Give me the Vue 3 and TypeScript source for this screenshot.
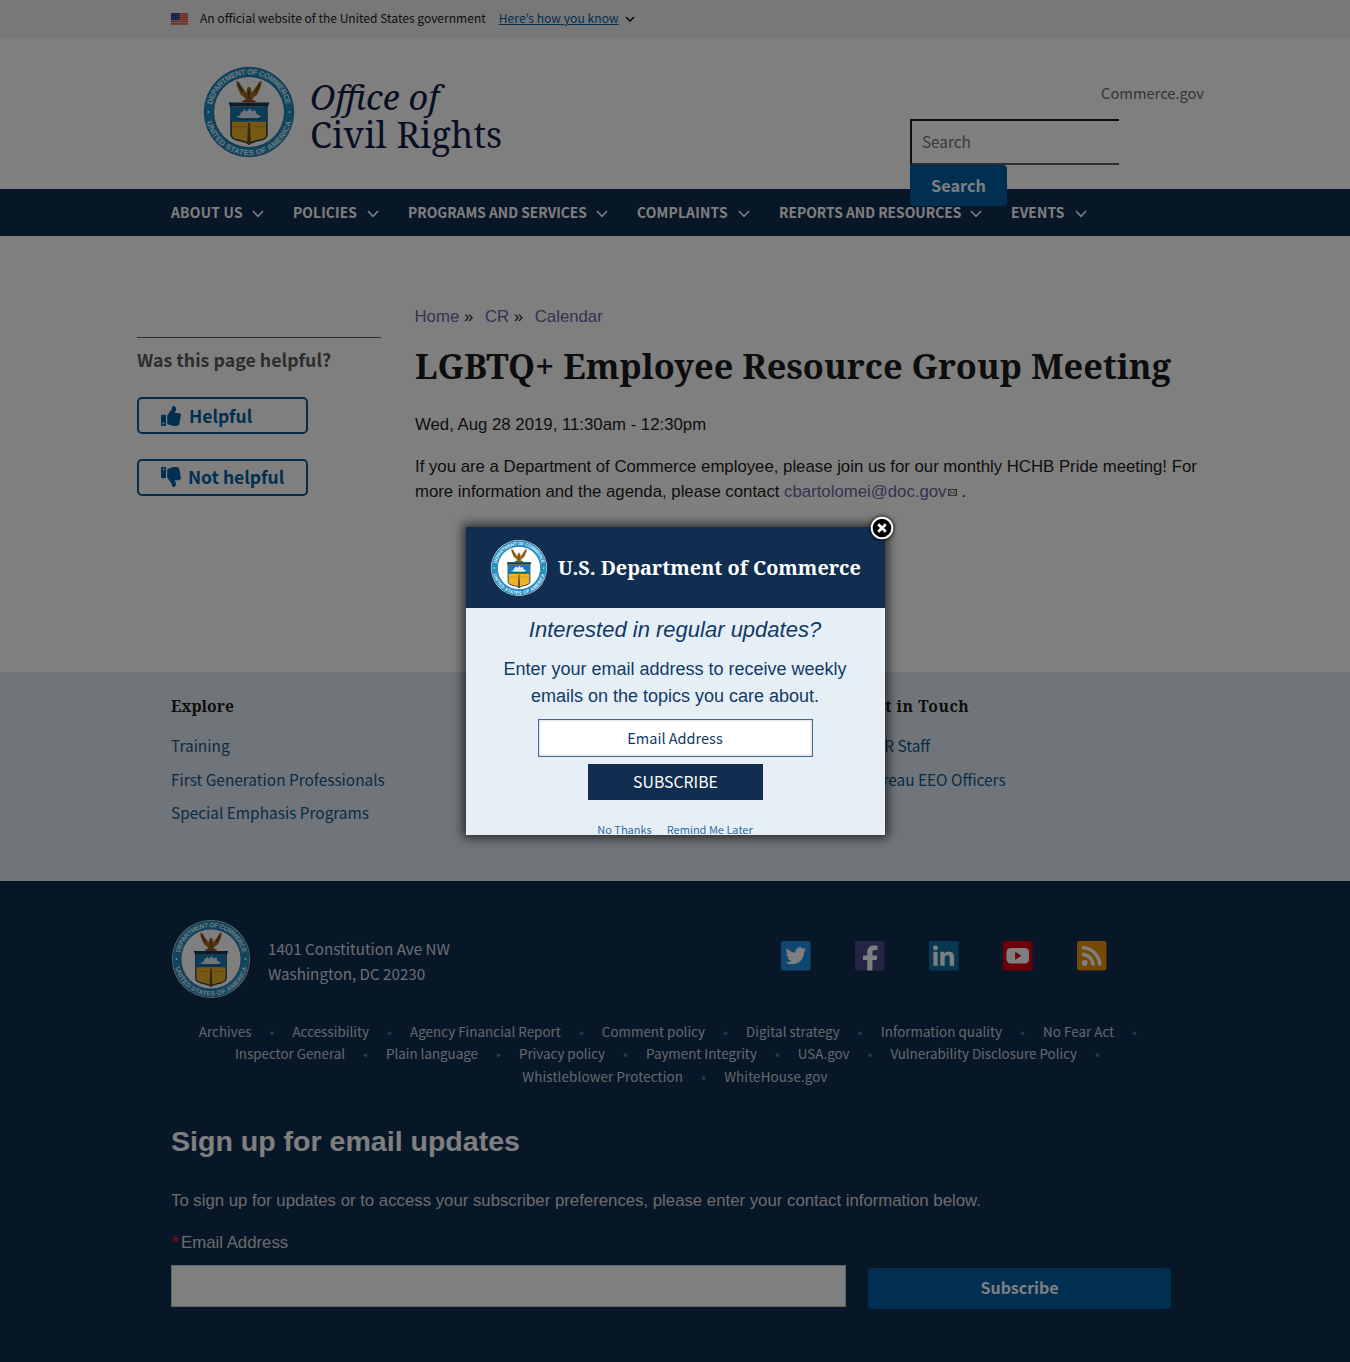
<script setup lang="ts">
interface MenuItem { label: string; spacing: string }

const menu: MenuItem[] = [
  { label: 'About Us', spacing: '0.25px' },
  { label: 'Policies', spacing: '0.1px' },
  { label: 'Programs and Services', spacing: '0' },
  { label: 'Complaints', spacing: '0.2px' },
  { label: 'Reports and Resources', spacing: '0' },
  { label: 'Events', spacing: '0.15px' },
]

const explore: string[] = ['Training', 'First Generation Professionals', 'Special Emphasis Programs']
const touch: string[] = ['OCR Staff', 'Bureau EEO Officers']

const footerRows: string[][] = [
  ['Archives', 'Accessibility', 'Agency Financial Report', 'Comment policy', 'Digital strategy', 'Information quality', 'No Fear Act'],
  ['Inspector General', 'Plain language', 'Privacy policy', 'Payment Integrity', 'USA.gov', 'Vulnerability Disclosure Policy'],
  ['Whistleblower Protection', 'WhiteHouse.gov'],
]

const thumb =
  'M104 224H24c-13.255 0-24 10.745-24 24v240c0 13.255 10.745 24 24 24h80c13.255 0 24-10.745 24-24V248c0-13.255-10.745-24-24-24zM64 472c-13.255 0-24-10.745-24-24s10.745-24 24-24 24 10.745 24 24-10.745 24-24 24zM384 81.452c0 42.416-25.97 66.208-33.277 94.548h101.723c33.397 0 59.397 27.746 59.553 58.098.084 17.938-7.546 37.249-19.439 49.197l-.11.11c9.836 23.337 8.237 56.037-9.308 79.469 8.681 25.895-.069 57.704-16.382 74.757 4.298 17.598 2.244 32.575-6.148 44.632C440.202 511.587 389.616 512 346.839 512l-2.845-.001c-48.287-.017-87.806-17.598-119.56-31.725-15.957-7.099-36.821-15.887-52.651-16.178-6.54-.12-11.783-5.457-11.783-11.998v-213.77c0-3.2 1.282-6.271 3.558-8.521 39.614-39.144 56.648-80.587 89.117-113.111 14.804-14.832 20.188-37.236 25.393-58.902C282.515 39.293 291.817 0 312 0c24 0 72 8 72 81.452z'
</script>

<template>
  <div class="page">
    <svg class="defs" width="0" height="0" aria-hidden="true">
      <defs>
        <path id="arc-top" d="M9.2 50 A40.8 40.8 0 0 1 90.8 50" />
        <path id="arc-bottom" d="M2.9 50 A47.1 47.1 0 0 0 97.1 50" />
        <symbol id="seal" viewBox="0 0 100 100">
          <circle cx="50" cy="50" r="48.6" fill="#1f8fc4" stroke="#1b6d9e" stroke-width="1" />
          <circle cx="50" cy="50" r="38.6" fill="#fff" stroke="#1b5f92" stroke-width="1" />
          <g font-family="Liberation Sans, Arial, sans-serif" font-weight="700" font-size="8.2" fill="#e3f3fa" text-anchor="middle">
            <text><textPath href="#arc-top" startOffset="50%" textLength="112">DEPARTMENT OF COMMERCE</textPath></text>
            <text><textPath href="#arc-bottom" startOffset="50%" textLength="126">UNITED STATES OF AMERICA</textPath></text>
          </g>
          <circle cx="5.8" cy="50" r="1.2" fill="#fff" />
          <circle cx="94.2" cy="50" r="1.2" fill="#fff" />
          <path d="M29 40.5h42l-1.5 4V75Q69 79 63 80.5Q54 82 50 85Q46 82 37 80.5Q31 79 30.5 75V44.5z" fill="#edb427" stroke="#173a55" stroke-width="1.6" />
          <path d="M30.5 44h39v16.5h-39z" fill="#1678b4" />
          <path d="M29 40.5h42l-1.4 3.3H30.4z" fill="#173a55" />
          <path d="M36 55l4-1 1-3 5-4 1 3 4-4 2 3 4-1 1 4 5 3-4 2H41z" fill="#dfe9f0" />
          <path d="M38 57.5h25" stroke="#12415f" stroke-width="1.2" />
          <path d="M49 62h2l1 22-2 1.5L48 84z" fill="#6b4a14" />
          <path d="M32 66h36" stroke="#c98f16" stroke-width="1" />
          <path d="M36 16l3 1 3 5 5 7 1-5 2-1.5 2 1.5 1 5 5-7 3-5 3-1-1 6-4 9-5 4v2l4 2H42l4-2v-2l-5-4-4-9z" fill="#a06c1c" />
          <path d="M38 19l5 9M62 19l-5 9M50 27v9" stroke="#56370c" stroke-width="1.4" fill="none" />
          <path d="M43 38.5h14" stroke="#9a3a22" stroke-width="1.8" />
        </symbol>
      </defs>
    </svg>

    <div class="banner">
      <svg class="flag" viewBox="0 0 17 12" width="17" height="12">
        <rect width="17" height="12" fill="#f0b8a8" />
        <path d="M0 .9h17M0 2.8h17M0 4.7h17M0 6.6h17M0 8.5h17M0 10.9h17" stroke="#dd4f3a" stroke-width="1.2" />
        <rect width="8.5" height="7" fill="#2a3f94" />
        <path d="M1 1.5h7M1 3.5h7M1 5.5h7" stroke="#7f8dc4" stroke-width=".6" stroke-dasharray="1 1" />
      </svg>
      <span class="official">An official website of the United States government</span>
      <a class="know">Here’s how you know</a>
      <svg class="tiny" width="10" height="7" viewBox="0 0 10 7"><path d="M1 1l4 4 4-4" /></svg>
    </div>

    <header class="header">
      <svg class="seal-lg"><use href="#seal" /></svg>
      <div class="brand">
        <div class="office">Office of</div>
        <div class="civil">Civil Rights</div>
      </div>
      <div class="tools">
        <a class="gov">Commerce.gov</a>
        <div class="field">Search</div>
        <div class="search-btn">Search</div>
      </div>
    </header>

    <nav class="nav">
      <div v-for="m in menu" :key="m.label" class="nav-item">
        <span :style="{ letterSpacing: m.spacing }">{{ m.label }}</span>
        <svg width="12" height="8" viewBox="0 0 12 8"><path d="M1 1l5 5.3L11 1" /></svg>
      </div>
    </nav>

    <main class="main">
      <aside class="aside">
        <div class="ask">Was this page helpful?</div>
        <div class="vote">
          <svg viewBox="0 0 512 512" width="20" height="20"><path :d="thumb" /></svg>Helpful
        </div>
        <div class="vote no">
          <svg class="down" viewBox="0 0 512 512" width="20" height="20"><path :d="thumb" /></svg>Not helpful
        </div>
      </aside>
      <article class="article">
        <div class="crumbs"><a>Home</a> » <a class="gap">CR</a> » <a class="gap">Calendar</a></div>
        <h1>LGBTQ+ Employee Resource Group Meeting</h1>
        <p class="date">Wed, Aug 28 2019, 11:30am - 12:30pm</p>
        <p class="body">
          If you are a Department of Commerce employee, please join us for our monthly HCHB Pride meeting! For<br />
          more information and the agenda, please contact <a>cbartolomei@doc.gov<svg class="mail" width="9" height="7" viewBox="0 0 9 7"><rect x=".5" y=".5" width="8" height="6" /><path d="M.5 1l4 3 4-3M1 6l2.5-2.5M8 6L5.5 3.5" /></svg></a> .
        </p>
      </article>
    </main>

    <section class="links">
      <div class="links-col">
        <h2>Explore</h2>
        <a v-for="l in explore" :key="l">{{ l }}</a>
      </div>
      <div class="links-col">
        <h2>Get in Touch</h2>
        <a v-for="l in touch" :key="l">{{ l }}</a>
      </div>
    </section>

    <footer class="footer">
      <div class="contact">
        <svg class="seal-md"><use href="#seal" /></svg>
        <address>1401 Constitution Ave NW<br />Washington, DC 20230</address>
        <div class="social">
          <svg viewBox="0 0 30 30"><rect width="30" height="30" rx="2" fill="#1d8fe0" /><path transform="translate(4.5 4.6) scale(.88)" fill="#fff" d="M23.953 4.57a10 10 0 01-2.825.775 4.958 4.958 0 002.163-2.723c-.951.555-2.005.959-3.127 1.184a4.92 4.92 0 00-8.384 4.482C7.69 8.095 4.067 6.13 1.64 3.162a4.822 4.822 0 00-.666 2.475c0 1.71.87 3.213 2.188 4.096a4.904 4.904 0 01-2.228-.616v.06a4.923 4.923 0 003.946 4.827 4.996 4.996 0 01-2.212.085 4.936 4.936 0 004.604 3.417 9.867 9.867 0 01-6.102 2.105c-.39 0-.779-.023-1.17-.067a13.995 13.995 0 007.557 2.209c9.053 0 13.998-7.496 13.998-13.985 0-.21 0-.42-.015-.63A9.935 9.935 0 0024 4.59z" /></svg>
          <svg viewBox="0 0 30 30"><rect width="30" height="30" rx="2" fill="#454a88" /><path fill="#fff" d="M12.5 30V19.3H8.2v-4.6h4.3v-3.2c0-4.5 2.6-6.9 6.6-6.9 1.9 0 3.3.1 3.8.2v4.4h-2.7c-2 0-2.5 1-2.5 2.5v3h5l-.7 4.6h-4.3V30z" /></svg>
          <svg viewBox="0 0 30 30"><rect width="30" height="30" rx="1" fill="#0a70a5" /><path fill="#fff" d="M4.5 11h4.3v14.2H4.5zM11.5 11h4.2v2c.7-1.3 2.2-2.4 4.4-2.4 4.5 0 5.4 2.9 5.4 6.8v7.8h-4.4v-7c0-1.7 0-3.7-2.3-3.7s-2.9 1.7-2.9 3.6v7.1h-4.4z" /><circle cx="6.6" cy="7" r="2.5" fill="#fff" /></svg>
          <svg viewBox="0 0 30 30"><rect width="30" height="30" rx="1" fill="#d80010" /><rect x="3.5" y="7" width="23" height="16" rx="4.5" fill="#fff" /><path fill="#d80010" d="M12.3 11v8l6.5-4z" /></svg>
          <svg viewBox="0 0 30 30"><rect width="30" height="30" rx="2.5" fill="#e8930c" /><circle cx="7.8" cy="22.3" r="2.9" fill="#fff" /><path d="M5 13.5c6.5 0 11.5 5 11.5 11.5M5 6.8c10 0 18.2 8.2 18.2 18.2" fill="none" stroke="#fff" stroke-width="3.4" /></svg>
        </div>
      </div>

      <div class="rows">
        <ul v-for="(row, i) in footerRows" :key="i" :class="'row-' + i">
          <li v-for="r in row" :key="r">{{ r }}</li>
        </ul>
      </div>

      <h2>Sign up for email updates</h2>
      <p class="intro">To sign up for updates or to access your subscriber preferences, please enter your contact information below.</p>
      <p class="label"><span>*</span>Email Address</p>
      <div class="form">
        <div class="email"></div>
        <div class="subscribe">Subscribe</div>
      </div>
    </footer>

    <div class="overlay"></div>

    <div class="modal">
      <div class="modal-head">
        <svg class="seal-sm"><use href="#seal" /></svg>
        <span>U.S. Department of Commerce</span>
      </div>
      <div class="modal-body">
        <div class="interest">Interested in regular updates?</div>
        <div class="enter">Enter your email address to receive weekly<br />emails on the topics you care about.</div>
        <div class="modal-input">Email Address</div>
        <div class="modal-btn">SUBSCRIBE</div>
        <div class="later"><a>No Thanks</a><a>Remind Me Later</a></div>
      </div>
    </div>
    <svg class="close" width="30" height="30" viewBox="0 0 30 30">
      <circle cx="15" cy="15" r="10.3" fill="#000" stroke="#fff" stroke-width="2" />
      <path d="M11.2 11.2l7.6 7.6M18.8 11.2l-7.6 7.6" stroke="#fff" stroke-width="2.8" />
    </svg>
  </div>
</template>

<style>
body {
  margin: 0;
}
</style>

<style scoped>
.page {
  --source: "Noto Sans CJK KR", "Noto Sans", sans-serif;
  --serif: "Noto Serif", "DejaVu Serif Condensed", serif;
  --sans: "Liberation Sans", Arial, sans-serif;
  position: relative;
  width: 1350px;
  height: 1362px;
  overflow: hidden;
  background: #fff;
  color: #1b1b1b;
  font-family: var(--source);
}
.defs { position: absolute; }
h1, h2, p, ul { margin: 0; padding: 0; }

.banner {
  box-sizing: border-box;
  height: 38px;
  padding-left: 171px;
  display: flex;
  align-items: center;
  background: #f0f0f0;
  font-size: 12.06px;
  line-height: 18px;
  white-space: nowrap;
}
.flag { margin-right: 12px; }
.official, .know { margin-top: -2px; }
.know { margin-left: 13px; margin-right: 6px; letter-spacing: .05px; color: #005ea2; text-decoration: underline; }
.tiny path { fill: none; stroke: #1b1b1b; stroke-width: 1.6; }

.header {
  position: relative;
  z-index: 2;
  height: 151px;
  display: flex;
  align-items: flex-start;
}
.seal-lg { width: 92px; height: 92px; margin: 28px 0 0 203px; }
.brand {
  width: 600px;
  margin: 40px 0 0 15px;
  font-family: var(--serif);
  color: #141d48;
}
.office { font-size: 34.3px; line-height: 38px; font-style: italic; }
.civil { font-size: 35.6px; line-height: 37px; letter-spacing: .15px; }
.tools { width: 295px; margin-top: 45px; }
.gov { display: block; font-size: 14.68px; line-height: 20px; text-align: right; padding-right: 1px; color: #666a70; }
.field {
  box-sizing: border-box;
  width: 209px;
  height: 46px;
  margin-top: 16px;
  padding-left: 10px;
  border: solid #1b1b1b;
  border-width: 2px 0 2px 2px;
  border-bottom-color: #565c65;
  font-size: 15.3px;
  line-height: 41px;
  color: #757575;
}
.search-btn {
  width: 97px;
  height: 41px;
  border-radius: 0 4px 4px 4px;
  background: #005ea2;
  color: #fff;
  font-size: 16.3px;
  font-weight: 700;
  line-height: 40px;
  text-align: center;
}

.nav {
  display: grid;
  grid-template-columns: 122px 115px 229px 142px 232px 105px;
  height: 47px;
  padding-left: 171px;
  background: #112e51;
  color: #fff;
}
.nav-item {
  display: flex;
  align-items: center;
  justify-content: space-between;
  padding-right: 29px;
  font-size: 13.83px;
  font-weight: 700;
  text-transform: uppercase;
  line-height: 24px;
  white-space: nowrap;
}
.nav-item span { margin-top: -1px; }
.nav-item svg { margin-top: 2px; }
.nav-item path { fill: none; stroke: #fff; stroke-width: 1.6; }

.main { height: 436px; display: flex; align-items: flex-start; }
.aside { width: 244px; margin: 101px 34px 0 137px; border-top: 1px solid #5b616b; }
.ask { margin: 7px 0 24px; font-size: 17.8px; font-weight: 700; line-height: 28px; color: #5b5b5b; }
.vote {
  box-sizing: border-box;
  display: flex;
  align-items: center;
  width: 171px;
  height: 37px;
  margin-bottom: 25px;
  padding-left: 22px;
  border: 2px solid #0b5a94;
  border-radius: 5px;
  color: #005ea2;
  font-size: 17.5px;
  font-weight: 700;
  line-height: 32px;
}
.vote svg { margin-right: 8px; fill: #005ea2; }
.vote.no { padding-bottom: 2px; }
.vote .down { margin-right: 7px; transform: scaleY(-1); }

.article { width: 800px; font-family: var(--sans); font-size: 16.78px; line-height: 25.2px; white-space: nowrap; }
.article a { color: #6f62a4; }
.crumbs { margin-top: 68px; margin-left: -.5px; }
.crumbs .gap { margin-left: 7px; }
.article h1 { margin-top: 14px; font-family: var(--serif); font-size: 34.33px; line-height: 46px; }
.date { margin-top: 23px; }
.body { margin-top: 17px; line-height: 25px; }
.mail { margin: 0 0 1px 1px; fill: none; stroke: #444; stroke-width: .8; }

.links { display: flex; height: 209px; padding-left: 171px; background: #e1ebf2; }
.links-col { width: 692px; display: flex; flex-direction: column; padding-top: 20px; }
.links-col + .links-col { width: 300px; }
.links h2 { margin-bottom: 13px; font-family: var(--serif); font-size: 15.73px; line-height: 28px; }
.links-col + .links-col h2 { letter-spacing: .5px; }
.links a { font-size: 15.4px; line-height: 24px; margin-bottom: 9.5px; color: #12588a; }

.footer { box-sizing: border-box; height: 481px; padding: 37px 179px 0 171px; background: #112e51; color: #fff; }
.contact { display: flex; align-items: flex-start; height: 103px; }
.seal-md { width: 78px; height: 78px; margin: 2px 1px 0; border-radius: 50%; background: #e4eaee; }
address { margin: 18px 0 0 17px; width: 513px; font-style: normal; font-size: 15.2px; line-height: 25.3px; color: #d6dbe2; }
.social { display: flex; gap: 44.5px; margin-top: 23px; }
.social svg { flex: none; width: 29.5px; height: 29.5px; }
.rows { height: 68px; font-size: 13.36px; line-height: 22.5px; color: #c9d0da; }
.rows ul { display: flex; justify-content: center; margin: 0 -10px; list-style: none; white-space: nowrap; }
.rows .row-0 { padding-left: 12px; letter-spacing: .04px; }
.rows .row-1 { padding-left: 11px; margin-top: -.5px; margin-bottom: .5px; }
.rows .row-2 { padding-left: 8px; letter-spacing: .15px; }
.rows li { display: flex; }
.rows li::after { content: "•"; width: 41px; text-align: center; font-size: 13px; color: #5478a5; }
.rows .row-2 li:last-child::after { display: none; }
.footer h2 { margin-top: 32px; font-family: var(--sans); font-size: 28.55px; line-height: 40px; }
.intro, .label { font-family: var(--sans); font-size: 16.78px; line-height: 24px; white-space: nowrap; color: #d6d7d9; }
.intro { margin-top: 28px; }
.label { margin-top: 18px; }
.label span { display: inline-block; width: 10px; color: #cd2026; font-weight: 700; text-indent: 1px; }
.form { display: flex; margin-top: 10px; }
.email { box-sizing: border-box; width: 675px; height: 42px; border: 1px solid #c4c8cc; background: #fff; }
.subscribe {
  width: 303px;
  height: 41px;
  margin: 3px 0 0 22px;
  border-radius: 4px;
  background: #005ea2;
  font-size: 15.96px;
  font-weight: 700;
  line-height: 38px;
  text-align: center;
}

.overlay { position: absolute; z-index: 5; inset: 0; background: rgba(0, 0, 0, .5); }

.modal {
  position: absolute;
  z-index: 6;
  left: 466px;
  top: 527px;
  width: 419px;
  height: 308px;
  background: #e7eff6;
  box-shadow: 0 0 10px 3px rgba(0, 0, 0, .65);
  text-align: center;
}
.modal-head { display: flex; align-items: center; height: 81px; padding-left: 25px; background: #112e51; color: #fff; }
.seal-sm { width: 56px; height: 56px; border-radius: 50%; background: #fff; }
.modal-head span { margin-left: 11px; font-family: var(--serif); font-size: 19.82px; font-weight: 700; white-space: nowrap; }
.modal-body { height: 227px; overflow: hidden; color: #113a66; }
.interest { margin-top: 6px; padding-right: 1px; font: italic 22px/32px var(--sans); }
.enter { margin-top: 10px; padding-right: 1px; font: 18px/27px var(--sans); }
.modal-input {
  box-sizing: border-box;
  width: 275px;
  height: 38px;
  margin: 9px auto 7px;
  padding-right: 1px;
  border: 1px solid #3f6a97;
  background: #fff;
  box-shadow: inset 0 0 3px #bbc;
  font-size: 14.5px;
  line-height: 35px;
}
.modal-btn { width: 175px; height: 36px; margin: 0 auto; background: #112e51; color: #fff; font-size: 15.8px; line-height: 36px; }
.later { display: flex; justify-content: center; gap: 15px; margin-top: 24px; padding-right: 1px; font-size: 11px; line-height: 11px; color: #2e6da4; }
.close { position: absolute; z-index: 7; left: 867px; top: 513px; filter: drop-shadow(0 0 2px #000); }
</style>
